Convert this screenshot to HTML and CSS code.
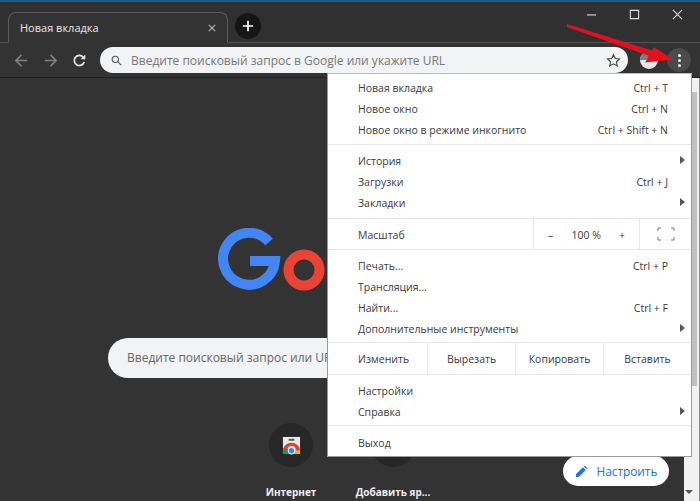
FILE: index.html
```html
<!DOCTYPE html>
<html lang="ru">
  <head>
    <meta charset="UTF-8" />
    <title>Новая вкладка</title>
    <link rel="stylesheet" href="styles.css">
  </head>
  <body>
    <div class="browser">
      <div class="tabstrip">
        <div class="tab">
          <span class="tab-title">Новая вкладка</span>
          <svg class="tab-close" viewBox="0 0 10 10"><path d="M1 1l8 8M9 1l-8 8" /></svg>
        </div>
        <button class="new-tab">
          <svg viewBox="0 0 14 14"><path d="M7 1v12M1 7h12" /></svg>
        </button>
        <div class="window-buttons">
          <svg viewBox="0 0 12 12"><path d="M1 6.500h10" /></svg>
          <svg viewBox="0 0 12 12"><path d="M1.500 1.500h9v9h-9z" /></svg>
          <svg viewBox="0 0 12 12"><path d="M1 1l10 10M11 1l-10 10" /></svg>
        </div>
      </div>

      <div class="toolbar">
        <svg class="nav-icon dim" viewBox="0 0 16 16"><path d="M14 8h-12M8 2l-6 6 6 6" /></svg>
        <svg class="nav-icon dim" viewBox="0 0 16 16"><path d="M2 8h12M8 2l6 6-6 6" /></svg>
        <svg class="nav-icon" viewBox="0 0 16 16"><path d="M13 9.500a5.400 5.400 0 1 1-1-5" /><path class="solid" d="M14.200 1.600v5h-5z" /></svg>
        <div class="omnibox">
          <svg class="search-icon" viewBox="0 0 14 14"><circle cx="5.500" cy="5.500" r="4" /><path d="M8.500 8.500l4.500 4.500" /></svg>
          <span class="omnibox-text">Введите поисковый запрос в Google или укажите URL</span>
          <svg class="star" viewBox="0 0 16 16"><path d="M8 1.800l1.900 4.100 4.500.5-3.300 3 .9 4.400-4-2.200-4 2.200.9-4.400-3.300-3 4.500-.5z" /></svg>
        </div>
        <div class="avatar"><span class="avatar-head"></span></div>
        <div class="menu-button"><span></span><span></span><span></span></div>
      </div>

      <div class="page">
        <div class="content">
          <svg class="logo" viewBox="0 0 110 64" role="img" aria-label="Google">
            <path class="logo-g" d="M51 14A26 26 0 1 0 57 33H32" />
            <circle class="logo-o" cx="86" cy="42" r="15.500" />
          </svg>
          <div class="searchbox">Введите поисковый запрос или URL</div>
          <div class="shortcuts">
            <div class="shortcut">
              <div class="shortcut-circle">
                <svg class="store" viewBox="0 0 20 20">
                  <path class="store-bag" d="M1 1h18v18h-18z" />
                  <path class="store-handle" d="M7 3h6v2h-6z" />
                  <path class="store-green" d="M1 13h5l2 6h-7z" />
                  <path class="store-yellow" d="M19 13h-5l-2 6h7z" />
                  <path class="store-red" d="M1 15a9 8 0 0 1 18 0h-4a5 4.500 0 0 0-10 0z" />
                  <circle class="store-blue" cx="10" cy="15.500" r="3.500" />
                </svg>
              </div>
              <span>Интернет</span>
            </div>
            <div class="shortcut">
              <div class="shortcut-circle"></div>
              <span>Добавить яр...</span>
            </div>
          </div>
          <button class="customize">
            <svg viewBox="0 0 14 14"><path d="M1 13v-3l7.500-7.500 3 3-7.500 7.500zM9.500 1.500l1-1 3 3-1 1z" /></svg>
            Настроить
          </button>
        </div>
        <div class="scrollbar">
          <span class="scroll-thumb"></span>
          <span class="scroll-arrow"></span>
        </div>
      </div>
    </div>

    <div class="menu">
      <div class="menu-group first">
        <div class="menu-item"><span>Новая вкладка</span><span class="keys">Ctrl + T</span></div>
        <div class="menu-item"><span>Новое окно</span><span class="keys">Ctrl + N</span></div>
        <div class="menu-item"><span>Новое окно в режиме инкогнито</span><span class="keys">Ctrl + Shift + N</span></div>
      </div>
      <div class="menu-group">
        <div class="menu-item sub"><span>История</span></div>
        <div class="menu-item"><span>Загрузки</span><span class="keys">Ctrl + J</span></div>
        <div class="menu-item sub"><span>Закладки</span></div>
      </div>
      <div class="menu-row zoom-row">
        <span class="row-label">Масштаб</span>
        <div class="zoom-controls"><span>–</span><span>100 %</span><span>+</span></div>
        <div class="fullscreen">
          <svg viewBox="0 0 18 14"><path d="M1 4v-3h3M14 1h3v3M17 10v3h-3M4 13h-3v-3" /></svg>
        </div>
      </div>
      <div class="menu-group tools">
        <div class="menu-item"><span>Печать...</span><span class="keys">Ctrl + P</span></div>
        <div class="menu-item"><span>Трансляция...</span></div>
        <div class="menu-item"><span>Найти...</span><span class="keys">Ctrl + F</span></div>
        <div class="menu-item sub"><span>Дополнительные инструменты</span></div>
      </div>
      <div class="menu-row edit-row">
        <span class="row-label">Изменить</span>
        <span class="edit-cell">Вырезать</span>
        <span class="edit-cell">Копировать</span>
        <span class="edit-cell">Вставить</span>
      </div>
      <div class="menu-group settings">
        <div class="menu-item"><span>Настройки</span></div>
        <div class="menu-item sub"><span>Справка</span></div>
      </div>
      <div class="menu-group last">
        <div class="menu-item"><span>Выход</span></div>
      </div>
    </div>

    <svg class="red-arrow" viewBox="0 0 700 80">
      <path d="M567 24l90 28-2 6-88-31z" />
      <path d="M654 47l19 12.500-28 3z" />
    </svg>
  </body>
</html>
```

FILE: styles.css
```css
* {
  box-sizing: border-box;
}
html,
body {
  margin: 0;
  height: 100%;
  overflow: hidden;
}
body {
  background: #333;
  font-family: 'Open Sans', sans-serif;
  font-size: 11px;
  color: #333;
}
svg path {
  fill: none;
  stroke: currentColor;
}

.browser {
  height: 501px;
  display: flex;
  flex-direction: column;
  border-top: 2px solid #1c5a8c;
}

/* tabs */
.tabstrip {
  height: 41px;
  display: flex;
  align-items: flex-end;
  padding-left: 8px;
  border-bottom: 1px solid #555;
  background: #303030;
}
.tab {
  width: 220px;
  height: 31px;
  margin-bottom: -1px;
  padding: 0 11px;
  display: flex;
  align-items: center;
  justify-content: space-between;
  background: #333;
  border: 1px solid #5a5a5a;
  border-bottom: 1px solid #333;
  border-radius: 8px 8px 0 0;
  color: #e8e8e8;
}
.tab-close {
  width: 8px;
  height: 8px;
  color: #bbb;
  stroke-width: 1.400;
}
.new-tab {
  width: 26px;
  height: 26px;
  margin: 0 0 3px 7px;
  padding: 0;
  border: none;
  border-radius: 50%;
  background: #161616;
  color: #fff;
  display: flex;
  align-items: center;
  justify-content: center;
}
.new-tab svg {
  width: 12px;
  height: 12px;
  stroke-width: 2;
}
.window-buttons {
  margin-left: auto;
  align-self: flex-start;
  display: flex;
  gap: 32px;
  padding: 7px 17px 0 0;
  color: #ddd;
}
.window-buttons svg {
  width: 11px;
  height: 11px;
  stroke-width: 1.200;
}

/* toolbar */
.toolbar {
  height: 34px;
  display: flex;
  align-items: center;
  padding: 0 9px 0 14px;
  background: #333;
}
.nav-icon {
  width: 15px;
  height: 15px;
  margin-right: 14px;
  color: #e8e8e8;
  stroke-width: 1.800;
  flex: none;
}
.nav-icon.dim {
  color: #808080;
}
.nav-icon .solid {
  fill: currentColor;
  stroke: none;
}
.omnibox {
  width: 528px;
  height: 26px;
  margin-left: -1px;
  padding: 0 7px 0 11px;
  display: flex;
  align-items: center;
  background: #f1f3f4;
  border-radius: 13px;
}
.search-icon {
  width: 11px;
  height: 11px;
  color: #555;
  stroke-width: 1.400;
}
.search-icon circle {
  fill: none;
  stroke: currentColor;
}
.omnibox-text {
  margin-left: 9px;
  font-size: 12px;
  color: #777;
}
.star {
  width: 15px;
  height: 15px;
  margin-left: auto;
  color: #444;
  stroke-width: 1.200;
}
.avatar {
  width: 18px;
  height: 18px;
  margin-left: 12px;
  border-radius: 50%;
  background: #e8e8e8;
  overflow: hidden;
}
.avatar-head {
  display: block;
  width: 14px;
  height: 9px;
  border-radius: 0 0 9px 0;
  background: #7c7c7c;
}
.menu-button {
  width: 24px;
  height: 24px;
  margin-left: 9px;
  border-radius: 50%;
  background: #4b4b4b;
  display: flex;
  flex-direction: column;
  align-items: center;
  justify-content: center;
  gap: 2px;
}
.menu-button span {
  width: 3px;
  height: 3px;
  border-radius: 50%;
  background: #eee;
}

/* new tab page */
.page {
  flex: 1;
  display: flex;
  background: #333;
  border-top: 1px solid #1e1e1e;
  min-height: 0;
}
.content {
  flex: 1;
  position: relative;
  display: flex;
  flex-direction: column;
  align-items: center;
  overflow: hidden;
}
.logo {
  width: 110px;
  height: 64px;
  margin: 150px 0 0 -138px;
  flex: none;
}
.logo-g {
  stroke: #4285f4;
  stroke-width: 10;
}
.logo-o {
  fill: none;
  stroke: #ea4335;
  stroke-width: 10;
}
.searchbox {
  width: 468px;
  height: 40px;
  margin-top: 46px;
  padding: 0 19px;
  border-radius: 20px;
  background: #f1f3f4;
  font-size: 12px;
  line-height: 40px;
  color: #666;
  flex: none;
}
.shortcuts {
  display: flex;
  gap: 14px;
  margin-top: 45px;
}
.shortcut {
  width: 88px;
  display: flex;
  flex-direction: column;
  align-items: center;
  gap: 18px;
  color: #eee;
  font-weight: 700;
  font-size: 10px;
}
.shortcut-circle {
  width: 44px;
  height: 44px;
  border-radius: 50%;
  background: #272727;
  display: flex;
  align-items: center;
  justify-content: center;
}
.store {
  width: 19px;
  height: 19px;
}
.store path {
  stroke: none;
}
.store .store-bag {
  fill: #ece8e2;
}
.store .store-handle {
  fill: #555;
}
.store .store-red {
  fill: #db4437;
}
.store .store-yellow {
  fill: #f4b400;
}
.store .store-green {
  fill: #0f9d58;
}
.store-blue {
  fill: #4285f4;
  stroke: #fff;
  stroke-width: 1;
}
.customize {
  position: absolute;
  right: 15px;
  bottom: 15px;
  width: 106px;
  height: 30px;
  padding: 0;
  border: none;
  border-radius: 15px;
  background: #fff;
  color: #1a73e8;
  font-family: inherit;
  font-size: 11.800px;
  display: flex;
  align-items: center;
  justify-content: center;
  gap: 9px;
}
.customize svg {
  width: 13px;
  height: 13px;
}
.customize path {
  fill: currentColor;
  stroke: none;
}
.scrollbar {
  width: 16px;
  padding: 14px 2px 0 0;
  display: flex;
  flex-direction: column;
  align-items: stretch;
  background: #f1f1f1;
  border-right: 1px solid #8a8a8a;
}
.scroll-thumb {
  height: 294px;
  background: #c1c1c1;
}
.scroll-arrow {
  height: 0;
  align-self: flex-end;
  margin: auto 4px 7px 0;
  border-left: 4px solid transparent;
  border-right: 4px solid transparent;
  border-top: 4px solid #555;
}

/* three dots menu */
.menu {
  position: absolute;
  left: 327px;
  top: 73px;
  width: 365px;
  height: 384px;
  background: #fff;
  border: 1px solid #9a9a9a;
  border-top-color: #bbb;
  color: #3a3a3a;
  font-size: 10.500px;
}
.menu-group {
  padding: 5px 0;
  border-bottom: 1px solid #e9e9e9;
}
.menu-group.first {
  padding: 3px 0 4px;
}
.menu-group.tools {
  padding-bottom: 3px;
}
.menu-group.settings {
  padding-bottom: 3px;
}
.menu-group.last {
  padding: 6px 0 0;
  border-bottom: none;
}
.menu-item {
  height: 21px;
  padding: 0 23px 0 30px;
  display: flex;
  align-items: center;
  justify-content: space-between;
  position: relative;
}
.menu-item.sub::after {
  content: "";
  position: absolute;
  right: 6px;
  top: 6px;
  border-left: 5px solid #555;
  border-top: 4px solid transparent;
  border-bottom: 4px solid transparent;
}
.menu-row {
  display: flex;
  align-items: center;
  border-bottom: 1px solid #e9e9e9;
}
.zoom-row {
  height: 31px;
}
.row-label {
  padding-left: 30px;
}
.zoom-row .row-label {
  width: 205px;
  padding-top: 1px;
}
.zoom-controls {
  width: 107px;
  height: 100%;
  padding: 1px 14px 0 14px;
  display: flex;
  align-items: center;
  justify-content: space-between;
  border-left: 1px solid #e9e9e9;
  border-right: 1px solid #e9e9e9;
}
.fullscreen {
  flex: 1;
  display: flex;
  justify-content: center;
}
.fullscreen svg {
  width: 18px;
  height: 14px;
  color: #777;
}
.edit-row {
  height: 32px;
}
.edit-row .row-label {
  width: 99px;
}
.edit-cell {
  width: 88px;
  height: 100%;
  display: flex;
  align-items: center;
  justify-content: center;
  border-left: 1px solid #e9e9e9;
}

.red-arrow {
  position: absolute;
  left: 0;
  top: 0;
  width: 700px;
  height: 80px;
}
.red-arrow path {
  fill: #e3101c;
  stroke: none;
}
```
